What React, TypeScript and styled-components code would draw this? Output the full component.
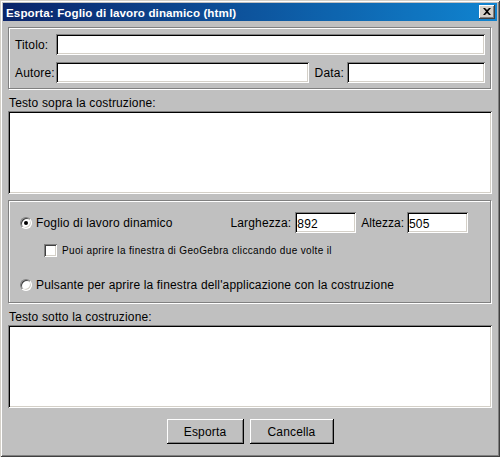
import React from "react";
import styled, { createGlobalStyle } from "styled-components";

const Global = createGlobalStyle`
  html, body { margin: 0; padding: 0; background: #c0c0c0; }
  body {
    font-family: "Liberation Sans", Arial, sans-serif;
    font-size: 12px;
    letter-spacing: 0.15px;
    color: #000;
  }
  * { box-sizing: border-box; }
`;

const Window = styled.div`
  width: 500px;
  height: 457px;
  padding: 3px;
  background: #c0c0c0;
  box-shadow: inset 1px 1px 0 #d4d0c8, inset -1px -1px 0 #404040,
    inset 2px 2px 0 #fff, inset -2px -2px 0 #808080;
  display: flex;
  flex-direction: column;
`;

const TitleBar = styled.div`
  height: 18px;
  flex: none;
  display: flex;
  align-items: center;
  padding: 0 2px 0 3px;
  background: linear-gradient(90deg, #0a246a 0%, #1084d0 100%);
  color: #fff;
  font-weight: bold;
  font-size: 11.6px;
  letter-spacing: 0.1px;
`;

const TitleText = styled.span`
  flex: 1;
  white-space: nowrap;
`;

const CloseButton = styled.div`
  width: 16px;
  height: 14px;
  background: #d4d0c8;
  box-shadow: inset -1px -1px 0 #404040, inset 1px 1px 0 #fff,
    inset -2px -2px 0 #808080;
  display: flex;
  align-items: center;
  justify-content: center;
  padding-bottom: 1px;
`;

const Body = styled.div`
  flex: 1;
  display: flex;
  flex-direction: column;
  padding: 6px 5px 10px 5px;
`;

const Etched = styled.div`
  border: 1px solid #808080;
  box-shadow: inset 1px 1px 0 #fff, 1px 1px 0 #fff;
  margin-right: 1px;
`;

const InfoGrid = styled(Etched)`
  display: grid;
  grid-template-columns: 38px 1fr auto 138px;
  column-gap: 3px;
  row-gap: 7px;
  padding: 6px 5px 5px 6px;
`;

const Label = styled.span<{ $ml?: number; $mr?: number; $ls?: number }>`
  align-self: center;
  white-space: nowrap;
  line-height: 14px;
  margin-left: ${(p) => p.$ml ?? 0}px;
  margin-right: ${(p) => p.$mr ?? 0}px;
  ${(p) => (p.$ls !== undefined ? `letter-spacing: ${p.$ls}px;` : "")}
`;

const Field = styled.input<{ $w?: number; $span?: string }>`
  height: 21px;
  width: ${(p) => (p.$w ? `${p.$w}px` : "100%")};
  ${(p) => (p.$span ? `grid-column: ${p.$span};` : "")}
  border: none;
  outline: none;
  margin: 0;
  padding: 2px 2px 0 2px;
  background: #fff;
  font-family: "Liberation Sans", Arial, sans-serif;
  font-size: 12px;
  letter-spacing: 0.15px;
  color: #000;
  box-shadow: inset 1px 1px 0 #808080, inset -1px -1px 0 #fff,
    inset 2px 2px 0 #000, inset -2px -2px 0 #d4d0c8;
`;

const SectionLabel = styled.div`
  line-height: 14px;
  height: 14px;
  margin: 7px 0 1px 0;
  padding-left: 1px;
`;

const TextArea = styled.textarea`
  display: block;
  width: 100%;
  height: 83px;
  flex: none;
  resize: none;
  border: none;
  outline: none;
  margin: 0;
  padding: 2px;
  background: #fff;
  font-family: "Liberation Sans", Arial, sans-serif;
  font-size: 12px;
  box-shadow: inset 1px 1px 0 #808080, inset -1px -1px 0 #fff,
    inset 2px 2px 0 #000, inset -2px -2px 0 #d4d0c8;
`;

const OptionsPanel = styled(Etched)`
  margin-top: 6px;
  padding: 11px 0 10px 11px;
  display: flex;
  flex-direction: column;
`;

const OptionRow = styled.div<{ $mt?: number; $indent?: number; $h: number }>`
  display: flex;
  align-items: center;
  height: ${(p) => p.$h}px;
  margin-top: ${(p) => p.$mt ?? 0}px;
  padding-left: ${(p) => p.$indent ?? 0}px;
  white-space: nowrap;
`;

const Radio = styled.span<{ $checked?: boolean }>`
  width: 12px;
  height: 12px;
  flex: none;
  border-radius: 50%;
  background: #fff;
  margin-right: 4px;
  position: relative;
  border: 1px solid;
  border-color: #808080 #fff #fff #808080;
  box-shadow: inset 1px 1px 0 #404040, inset -1px -1px 0 #d4d0c8;
  &::after {
    content: "";
    display: ${(p) => (p.$checked ? "block" : "none")};
    position: absolute;
    left: 3px;
    top: 3px;
    width: 4px;
    height: 4px;
    border-radius: 50%;
    background: #000;
  }
`;

const Check = styled.span`
  width: 13px;
  height: 13px;
  flex: none;
  background: #fff;
  margin-right: 5px;
  box-shadow: inset 1px 1px 0 #808080, inset -1px -1px 0 #fff,
    inset 2px 2px 0 #404040, inset -2px -2px 0 #d4d0c8;
`;

const SmallText = styled.span`
  font-size: 10px;
  letter-spacing: 0.35px;
`;

const SizeGroup = styled.div`
  margin-left: auto;
  padding-right: 22px;
  display: flex;
  align-items: center;
`;

const ButtonRow = styled.div`
  margin-top: 11px;
  display: flex;
  justify-content: center;
  gap: 6px;
`;

const Button = styled.button<{ $w: number }>`
  width: ${(p) => p.$w}px;
  height: 25px;
  margin: 0;
  padding: 0;
  border: none;
  background: #c0c0c0;
  font-family: "Liberation Sans", Arial, sans-serif;
  font-size: 12px;
  letter-spacing: 0.15px;
  color: #000;
  box-shadow: inset -1px -1px 0 #000, inset 1px 1px 0 #fff,
    inset -2px -2px 0 #808080;
`;

export default function App() {
  return (
    <>
      <Global />
      <Window>
        <TitleBar>
          <TitleText>Esporta: Foglio di lavoro dinamico (html)</TitleText>
          <CloseButton>
            <svg width="8" height="7" viewBox="0 0 8 7">
              <path d="M0 0 L2 0 L4 2 L6 0 L8 0 L5 3.5 L8 7 L6 7 L4 5 L2 7 L0 7 L3 3.5 Z" fill="#000" />
            </svg>
          </CloseButton>
        </TitleBar>
        <Body>
          <InfoGrid>
            <Label>Titolo:</Label>
            <Field $span="2 / 5" readOnly defaultValue="" />
            <Label>Autore:</Label>
            <Field readOnly defaultValue="" />
            <Label $ml={3}>Data:</Label>
            <Field readOnly defaultValue="" />
          </InfoGrid>

          <SectionLabel>Testo sopra la costruzione:</SectionLabel>
          <TextArea readOnly defaultValue="" />

          <OptionsPanel>
            <OptionRow $h={21}>
              <Radio $checked />
              <span>Foglio di lavoro dinamico</span>
              <SizeGroup>
                <Label $mr={4}>Larghezza:</Label>
                <Field $w={61} readOnly defaultValue="892" />
                <Label $ml={5} $mr={3} $ls={0}>Altezza:</Label>
                <Field $w={61} readOnly defaultValue="505" />
              </SizeGroup>
            </OptionRow>
            <OptionRow $h={13} $mt={11} $indent={24}>
              <Check />
              <SmallText>Puoi aprire la finestra di GeoGebra cliccando due volte il</SmallText>
            </OptionRow>
            <OptionRow $h={14} $mt={21}>
              <Radio />
              <span>Pulsante per aprire la finestra dell'applicazione con la costruzione</span>
            </OptionRow>
          </OptionsPanel>

          <SectionLabel>Testo sotto la costruzione:</SectionLabel>
          <TextArea readOnly defaultValue="" />

          <ButtonRow>
            <Button $w={77}>Esporta</Button>
            <Button $w={84}>Cancella</Button>
          </ButtonRow>
        </Body>
      </Window>
    </>
  );
}
